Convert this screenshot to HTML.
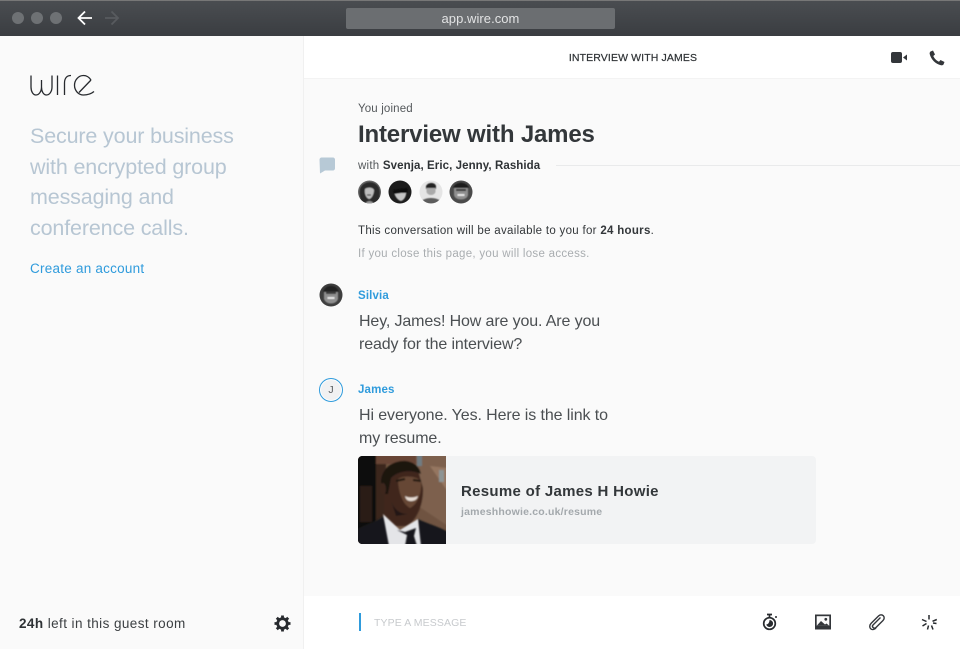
<!DOCTYPE html>
<html><head><meta charset="utf-8"><style>
*{margin:0;padding:0;box-sizing:border-box}
html,body{width:960px;height:649px;overflow:hidden;background:#fff}
body{position:relative;font-family:"Liberation Sans",sans-serif;color:#33373a}
.t{position:absolute;white-space:nowrap;line-height:1}
.a{position:absolute}
</style></head><body>
<div class="a" style="left:0;top:0;width:960px;height:36px;background:linear-gradient(#4a4d51,#3a3d41);border-top:1px solid #777"></div>
<div class="a" style="left:12px;top:12px;width:12px;height:12px;border-radius:50%;background:#6e7174"></div>
<div class="a" style="left:31px;top:12px;width:12px;height:12px;border-radius:50%;background:#6e7174"></div>
<div class="a" style="left:50px;top:12px;width:12px;height:12px;border-radius:50%;background:#6e7174"></div>
<svg class="a" style="left:76px;top:9px" width="44" height="18" fill="none" stroke-width="1.800"><path d="M3 9H16M9 2.500L2.500 9L9 15.500" stroke="#fff"/><path d="M29 9H42M35.500 2.500L42 9L35.500 15.500" stroke="#585b5f"/></svg>
<div class="a" style="left:346px;top:8px;width:269px;height:21px;background:#6b6e71;border-radius:2px"></div>
<div class="t" style="left:346px;width:269px;text-align:center;top:11.500px;font-size:13px;color:#e2e3e4;letter-spacing:.05px">app.wire.com</div>

<div class="a" style="left:0;top:36px;width:304px;height:613px;background:#fafafa;border-right:1px solid #f0f0f0"></div>
<div class="a" style="left:304px;top:78px;width:656px;height:518px;background:#fafafa;border-top:1px solid #f3f3f3"></div>

<svg class="a" style="left:29px;top:72px" width="68" height="26" viewBox="0 0 68 26" fill="none" stroke="#272a2e" stroke-width="1.300" role="img"><title>wire</title><path d="M2 3.500V15C2 19.500 4 23 7 23S12.500 19.500 12.500 15V8V15C12.500 19.500 14.500 23 17.500 23S23 19.500 23 15V3.500"/><path d="M28.500 3.500V23"/><path d="M35.500 23V11C35.500 6 38 3.500 42 3.500"/><path d="M62 8L50 20.500M62 8C60 5 57.500 3.500 54.500 3.500C49.500 3.500 45.500 8 45.500 13.300S49.500 23 54.500 23C58.500 23 62 22 65 19.500" /></svg>

<div class="t" style="left:30px;top:121px;font-size:21.500px;line-height:30.500px;color:#b7c6d3;letter-spacing:-.15px">Secure your business<br>with encrypted group<br>messaging and<br>conference calls.</div>
<div class="t" style="left:30px;top:262px;font-size:13.500px;color:#2f9bdc;letter-spacing:.24px">Create an account</div>
<div class="t" style="left:19px;top:617px;font-size:13.500px;color:#3b3f42;letter-spacing:.42px"><b style="color:#2e3235">24h</b> left in this guest room</div>
<svg class="a" style="left:274px;top:615px" width="17" height="17" viewBox="0 0 17 17"><circle cx="8.500" cy="8.500" r="4.800" fill="none" stroke="#272a2e" stroke-width="2.800"/><path d="M8.500 0.500V3.500M8.500 13.500V16.500M0.500 8.500H3.500M13.500 8.500H16.500M2.800 2.800L5 5M12 12L14.200 14.200M14.200 2.800L12 5M5 12L2.800 14.200" stroke="#272a2e" stroke-width="2.800"/></svg>

<div class="t" style="left:304px;width:658px;text-align:center;top:53px;font-size:10.500px;letter-spacing:.12px;color:#2e3235;-webkit-text-stroke:.2px #2e3235">INTERVIEW WITH JAMES</div>
<svg class="a" style="left:890px;top:50px" width="18" height="15"><rect x="1" y="2" width="11" height="11" rx="2" fill="#33363a"/><path d="M13 7.500L17 4.500V10.500Z" fill="#33363a"/></svg>
<svg class="a" style="left:928px;top:49px" width="18" height="18" viewBox="0 0 18 18"><path d="M2.500 2.500L5 1.500L7 5.500L5.300 7C6.300 9.500 8.500 11.700 11 12.700L12.500 11L16.500 13L15.500 15.500C15 16.200 14 16.500 13 16.300C7.500 15 3 10.500 1.700 5C1.500 4 1.800 3 2.500 2.500Z" fill="#33363a"/></svg>

<div class="t" style="left:358px;top:104px;font-size:11.500px;color:#54585b;letter-spacing:.15px">You joined</div>
<div class="t" style="left:358px;top:123px;font-size:24px;font-weight:bold;color:#33373a;letter-spacing:-.17px">Interview with James</div>
<svg class="a" style="left:319px;top:157px" width="17" height="17"><path d="M2.500 .5H14C15 .5 16 1.500 16 2.500V11.500C16 12.500 15 13.500 14 13.500H6L1 16.500L.5 2.500C.5 1.500 1.500 .5 2.500 .5Z" fill="#b7c9d6"/></svg>
<div class="t" style="left:358px;top:161px;font-size:11.500px;color:#54585b;letter-spacing:.25px">with <b style="color:#2e3235;letter-spacing:.08px">Svenja, Eric, Jenny, Rashida</b></div>
<div class="a" style="left:556px;top:165px;width:404px;height:1px;background:#e9eaeb"></div>

<svg class="a" style="left:357px;top:180px" width="118" height="24" viewBox="0 0 118 24">
<defs><filter id="s" x="-5%" y="-5%" width="110%" height="110%"><feGaussianBlur stdDeviation=".6"/></filter><clipPath id="r1"><circle cx="12.500" cy="12" r="11.500"/></clipPath><clipPath id="r2"><circle cx="43" cy="12" r="11.500"/></clipPath><clipPath id="r3"><circle cx="74" cy="12" r="11.500"/></clipPath><clipPath id="r4"><circle cx="104" cy="12" r="11.500"/></clipPath></defs>
<g clip-path="url(#r1)"><rect x="0" width="25" height="24" fill="#6a6a6a"/><g filter="url(#s)"><path d="M3 9C6 0 19 0 22 8C24 14 22 20 20 24H6C3 20 2 14 3 9Z" fill="#2a2a2a"/><path d="M8 9C10 7 16 7 17 10C17 15 14 19 12 19C9 18 7 13 8 9Z" fill="#bdbdbd"/><path d="M10 15H14" stroke="#444" stroke-width="1.200"/><path d="M8 24C10 20 15 20 17 24Z" fill="#999"/></g></g>
<g clip-path="url(#r2)"><rect x="31" width="25" height="24" fill="#1d1d1d"/><g filter="url(#s)"><path d="M37 11L49 10C50 14 48 20 44 21C40 20 37 15 37 11Z" fill="#c4c4c4"/><path d="M36 10L51 8L50 13L44 13L37 14Z" fill="#0d0d0d"/></g></g>
<g clip-path="url(#r3)"><rect x="62" width="25" height="24" fill="#e5e5e5"/><g filter="url(#s)"><path d="M69 6C71 2 78 2 79 6V9H69Z" fill="#222"/><path d="M69.500 8H78.500V12C77 16 71 16 69.500 12Z" fill="#aaa"/><path d="M63 24C64 16 84 16 85 24Z" fill="#5c5c5c"/></g></g>
<g clip-path="url(#r4)"><rect x="92" width="25" height="24" fill="#4a4a4a"/><g filter="url(#s)"><path d="M97 9C97 3 111 3 111 9V15C110 21 98 21 97 15Z" fill="#8f8f8f"/><path d="M96 8C98 1 110 1 112 8Z" fill="#1e1e1e"/><path d="M99 10H109" stroke="#222" stroke-width="1.600"/><path d="M100.500 15H107.500" stroke="#eee" stroke-width="1.800"/></g></g>
</svg>

<div class="t" style="left:358px;top:226px;font-size:11.500px;color:#33373a;letter-spacing:.3px">This conversation will be available to you for <b>24 hours</b>.</div>
<div class="t" style="left:358px;top:249px;font-size:11.500px;color:#a9adb0;letter-spacing:.29px">If you close this page, you will lose access.</div>

<svg class="a" style="left:319px;top:283px" width="24" height="24"><defs><clipPath id="r5"><circle cx="12" cy="12" r="11.500"/></clipPath></defs><g clip-path="url(#r5)"><rect width="24" height="24" fill="#3e3e3e"/><g filter="url(#s)"><path d="M5 10C5 3 19 3 19 10V16C17 22 7 22 5 16Z" fill="#8f8f8f"/><path d="M4 9C6 1 18 1 20 9Z" fill="#222"/><path d="M7 10H17" stroke="#222" stroke-width="1.500"/><path d="M8.500 15H15.500" stroke="#eee" stroke-width="1.800"/></g></g></svg>
<div class="t" style="left:358px;top:291px;font-size:11.500px;font-weight:bold;color:#2f9bdc;letter-spacing:.15px">Silvia</div>
<div class="t" style="left:359px;top:310px;font-size:16px;line-height:23px;color:#4b4f52;letter-spacing:-.13px">Hey, James! How are you. Are you<br>ready for the interview?</div>

<div class="a" style="left:319px;top:378px;width:24px;height:24px;border-radius:50%;border:1.500px solid #2f9bdc;background:#f1f1f2;box-shadow:inset 0 0 0 1px #fff;font-size:10.500px;line-height:22px;text-align:center;color:#55595c">J</div>
<div class="t" style="left:358px;top:385px;font-size:11.500px;font-weight:bold;color:#2f9bdc;letter-spacing:.15px">James</div>
<div class="t" style="left:359px;top:404px;font-size:16px;line-height:23px;color:#4b4f52;letter-spacing:-.1px">Hi everyone. Yes. Here is the link to<br>my resume.</div>

<div class="a" style="left:358px;top:456px;width:458px;height:88px;background:#f2f3f4;border-radius:4px"></div>
<svg class="a" style="left:358px;top:456px" width="88" height="88" viewBox="0 0 88 88">
<defs><clipPath id="c"><path d="M4 0H88V88H4C2 88 0 86 0 84V4C0 2 2 0 4 0Z"/></clipPath><filter id="p" x="-5%" y="-5%" width="110%" height="110%"><feGaussianBlur stdDeviation=".9"/></filter></defs>
<g clip-path="url(#c)"><rect width="88" height="88" fill="#6f5341"/><g filter="url(#p)">
<rect x="-2" y="-2" width="92" height="10" fill="#674535"/>
<path d="M58 -2H90V70L60 50Z" fill="#7d614e"/>
<path d="M72 10L90 36V12Z" fill="#957660"/>
<rect x="59" y="-2" width="5" height="12" fill="#6f7d83"/><rect x="81" y="14" width="5" height="12" fill="#8e9494"/>
<rect x="-2" y="-2" width="20" height="92" fill="#100c09"/>
<path d="M18 8H28L26 60L18 66Z" fill="#3a271c"/><path d="M2 30H14V66H2Z" fill="#2a1d15"/>
<path d="M26 60L26 30L34 16L60 14L65 32C66 48 58 66 48 70H34Z" fill="#40281d"/>
<path d="M23 26C23 12 36 4 48 5C56 6 62 11 63 18C52 13 40 15 33 22L30 38H26Z" fill="#1c1411"/>
<ellipse cx="25" cy="33" rx="3" ry="6" fill="#3c261b"/>
<path d="M40 23C46 19 58 20 63 25C64 36 60 48 52 52C44 48 40 34 40 23Z" fill="#664734"/>
<path d="M38 25L47 23M55 24L63 25" stroke="#1c1411" stroke-width="2"/>
<path d="M33 44C36 54 42 58 50 58L38 60Z" fill="#241712"/>
<path d="M47 40C50 42 56 42 60 40C59 44 56 45 53 45C50 45 48 44 47 40Z" fill="#e8ded6"/>
</g>
<path d="M-2 90V74C8 68 18 66 25 60L40 90Z" fill="#14151a" filter="url(#p)"/><path d="M90 90V76C80 70 70 68 60 63L60 90Z" fill="#14151a" filter="url(#p)"/>
<path d="M25 58L42 74L60 63L63 90H31Z" fill="#e4e5e8" filter="url(#p)"/>
<path d="M39 74L47 76L58 72L56 80L59 90H47L49 79Z" fill="#16161a" filter="url(#p)"/></g></svg>
<div class="t" style="left:461px;top:484px;font-size:15px;font-weight:bold;color:#33373a;letter-spacing:.3px">Resume of James H Howie</div>
<div class="t" style="left:461px;top:507px;font-size:10.500px;font-weight:bold;color:#a3a8ac;letter-spacing:.2px">jameshhowie.co.uk/resume</div>

<div class="a" style="left:359px;top:613px;width:2px;height:18px;background:#2f9bdc"></div>
<div class="t" style="left:374px;top:618px;font-size:10.500px;color:#c7cacd;letter-spacing:.1px">TYPE A MESSAGE</div>

<svg class="a" style="left:760px;top:612px" width="20" height="20" viewBox="0 0 20 20" fill="none"><circle cx="9.500" cy="11.500" r="5.800" stroke="#272a2e" stroke-width="1.700"/><path d="M7 2.500H12M9.500 2.500V5" stroke="#272a2e" stroke-width="1.700"/><path d="M9.500 8A3.500 3.500 0 1 1 6.200 12.500C8 12.500 9.500 10.500 9.500 8Z" fill="#272a2e"/><circle cx="16" cy="5" r="1" fill="#272a2e"/></svg>
<svg class="a" style="left:814px;top:613px" width="18" height="18" viewBox="0 0 18 18"><path d="M1 1.500H17V16.500H1Z" fill="#33363a"/><rect x="2.700" y="3.200" width="12.600" height="9.500" fill="#fafafa"/><path d="M2.700 12.800L7 8L11 11.500L12.500 10.500L15.300 12.800Z" fill="#33363a"/><circle cx="11.800" cy="6.300" r="1.400" fill="#33363a"/></svg>
<svg class="a" style="left:868px;top:613px" width="18" height="18" viewBox="0 0 18 18" fill="none" stroke="#33363a" stroke-width="1.400"><path d="M12.500 4.500L5 12C4 13 4.500 14 5.200 14.700C6 15.400 7 15.600 8 14.500L15 7.500C16.500 6 16.500 4 15.300 2.800C14 1.500 12 1.500 10.500 3L3.200 10.300C1.200 12.300 1.500 14.500 2.700 15.700S6 17 8 15"/></svg>
<svg class="a" style="left:921px;top:614px" width="17" height="17" viewBox="0 0 17 17" stroke="#272a2e" stroke-width="1.500"><path d="M8 1V5.500M15.800 5.500L11.500 7.300M15.500 9.500L12 9M12 15.500L10.500 11.500M6.500 15.500L7.500 11.500M1.500 12L5.500 9.500M1 5.500L5.500 7.500"/></svg>
</body></html>
